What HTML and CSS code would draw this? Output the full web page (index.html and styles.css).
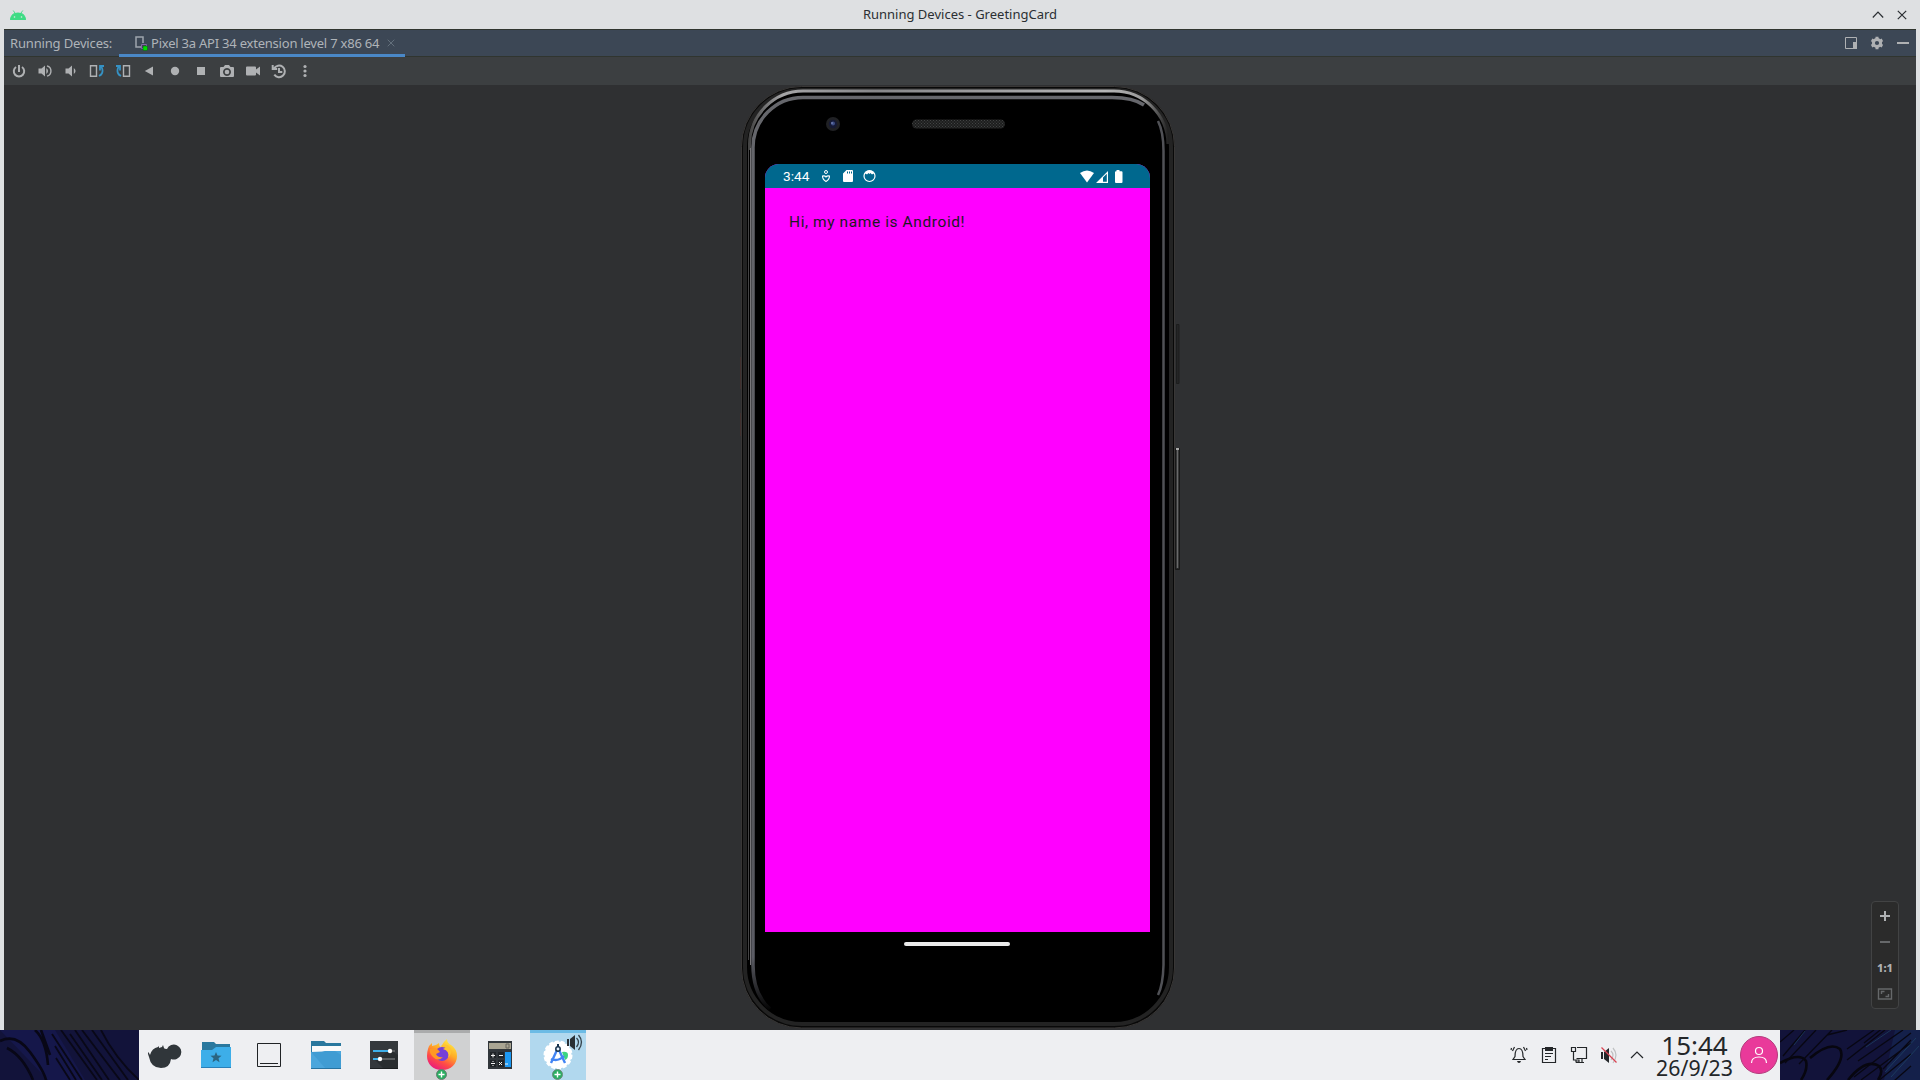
FILE: index.html
```html
<!DOCTYPE html>
<html lang="en">
<head>
<meta charset="utf-8">
<title>Running Devices - GreetingCard</title>
<link rel="stylesheet" href="styles.css">
</head>
<body>
<div class="desktop">
  <main class="window">
    <header class="titlebar">
      <svg class="app-icon" viewBox="10 8 16 12" width="16" height="12"><path d="M10.3 19C10.6 15.400 12.500 13 15 12L13.200 9.500M25.700 19C25.400 15.400 23.500 13 21 12L22.800 9.500" fill="none" stroke="#3ddc84" stroke-width=".9"/><path d="M10.200 19a7.800 7.600 0 0 1 15.600 0z" fill="#3ddc84"/><circle cx="14.500" cy="16" r=".8" fill="#dfe9e3"/><circle cx="21.500" cy="16" r=".8" fill="#dfe9e3"/></svg>
      <h1 class="title">Running Devices - GreetingCard</h1>
      <svg class="win-controls" viewBox="1870 6 40 16" width="40" height="16" fill="none" stroke="#2b2f33" stroke-width="1.200"><path d="M1872.800 16.500l5.200-5.500 5.200 5.500M1897.800 9.800l8.400 8.400m0-8.400l-8.400 8.400"/></svg>
    </header>
    <nav class="tabs">
      <span class="tabs-label">Running Devices:</span>
      <div class="tab">
        <svg viewBox="134 35 14 17" width="14" height="17"><path d="M141 48h-5V38h7v6" fill="none" stroke="#9da5ad" stroke-width="1.500"/><path d="M141.500 45.500h5v4h-5z" fill="none" stroke="#8568a8"/><rect x="143" y="47" width="4.500" height="4.500" rx="1" fill="#0d0" stroke="#174c20" stroke-width=".5"/></svg>
        <span class="tab-name">Pixel 3a API 34 extension level 7 x86 64</span>
        <svg class="tab-close" viewBox="0 0 8 8" width="8" height="8"><path d="M.7.7l6.600 6.600m0-6.600L.7 7.300" stroke="#64707c"/></svg>
      </div>
      <svg class="tab-actions" viewBox="1844 35 66 17" width="66" height="17"><path d="M1845.500 37.500h11v11h-11z" fill="none" stroke="#afb1b3"/><path d="M1853 42h4v7h-4zM1897 42h12v2h-12z" fill="#afb1b3"/><circle cx="1877" cy="43" r="3.600" fill="none" stroke="#afb1b3" stroke-width="3"/><path d="M1877 36.800v2.500m0 7.400v2.500m-5.400-9.300l2.200 1.200m6.400 3.800l2.200 1.200m0-6.200l-2.200 1.200m-6.400 3.800l-2.200 1.200" stroke="#afb1b3" stroke-width="3"/></svg>
    </nav>
    <div class="toolbar">
      <svg viewBox="-13 -14 26 28"><path d="M0-6V1M-3-4A5.200 5.200 0 1 0 3-4" class="line"/></svg>
      <svg viewBox="-13 -14 26 28"><path d="M-6.500-2.500h3L0-5.500v11L-3.500 2.500h-3z"/><path d="M1.300-3q3.500 3 0 6z"/><path d="M2-5.200a5.400 5.400 0 0 1 0 10.400" class="line thin"/></svg>
      <svg viewBox="-13 -14 26 28"><path d="M-5.500-2.500h3L1-5.500v11L-2.500 2.500h-3z"/><path d="M2.800-3q3.500 3 0 6z"/></svg>
      <svg viewBox="-13 -14 26 28"><path d="M-6.500-5.200h6v10.400h-6z" class="line thin"/><path d="M2 5Q6 3 5.500-1T2.500-4.500M3-.5v-4.500h4" class="line blue"/></svg>
      <svg viewBox="-13 -14 26 28"><path d="M.5-5.200h6v10.400h-6z" class="line thin"/><path d="M-2 5Q-6 3-5.500-1T-2.500-4.500M-3-.5v-4.500h-4" class="line blue"/></svg>
      <svg viewBox="-13 -14 26 28"><path d="M-4.200 0L4-4.500v9z"/></svg>
      <svg viewBox="-13 -14 26 28"><circle r="4.200"/></svg>
      <svg viewBox="-13 -14 26 28"><path d="M-4-4h8v8h-8z"/></svg>
      <svg viewBox="-13 -14 26 28"><path fill-rule="evenodd" d="M-6-4h2.500L-2-6h4l1.500 2H6q1 0 1 1v8q0 1-1 1H-6q-1 0-1-1v-8q0-1 1-1zM0-3a4 4 0 1 0 .01 0z"/><circle cy="1" r="2.300"/></svg>
      <svg viewBox="-13 -14 26 28"><path d="M-6-4.500h8q1 0 1 1v2l4-3v9l-4-3v2q0 1-1 1h-8q-1 0-1-1v-7q0-1 1-1z"/></svg>
      <svg viewBox="-13 -14 26 28"><path d="M-5-2.500A5.800 5.800 0 1 1-4.700 3.700M-6.300-6v4h4.500M0-3V1h3.300" class="line"/></svg>
      <svg viewBox="-13 -14 26 28"><circle cy="-4.500" r="1.600"/><circle r="1.600"/><circle cy="4.500" r="1.600"/></svg>
    </div>
    <section class="stage">
      <div class="phone">
        <svg class="phone-frame" viewBox="730 85 460 945" width="460" height="945">
          <defs>
            <linearGradient id="side" gradientUnits="userSpaceOnUse" x1="0" y1="95" x2="0" y2="1012"><stop offset="0" stop-color="#66676c"/><stop offset=".8" stop-color="#56575c"/><stop offset=".94" stop-color="#5c5d65"/><stop offset="1" stop-color="#000"/></linearGradient>
            <linearGradient id="shine" gradientUnits="userSpaceOnUse" x1="749" x2="1168" y1="0" y2="0"><stop offset="0" stop-color="#444"/><stop offset=".08" stop-color="#a5a5a7"/><stop offset=".3" stop-color="#87878a"/><stop offset=".85" stop-color="#b5b5b6"/><stop offset=".94" stop-color="#999"/><stop offset="1" stop-color="#222"/></linearGradient>
            <pattern id="mesh" width="3" height="3" patternUnits="userSpaceOnUse"><path d="M0 0h3v3H0z" fill="#1d1e1e"/><path d="M0 0h1v1H0zM1.500 1.500h1v1h-1z" fill="#424444"/></pattern>
          </defs>
          <path d="M1176.500 324.500h2.500v59h-2.500z" fill="#242526" stroke="#1c1d1d"/>
          <path d="M1175.500 448.500h4v121h-4z" fill="#262727" stroke="#181818"/><path d="M1177.500 449v119" stroke="#69696a" stroke-width="1.500"/><path d="M1176 448h3v2h-3z" fill="#aaa"/>
          <path d="M740.500 357v32m0 24v23" stroke="#40302f"/>
          <rect x="741.500" y="86.500" width="433" height="941.500" rx="60" fill="#090909" stroke="#393736"/>
          <rect x="745" y="90" width="426" height="934" rx="57" fill="#000" stroke="#232323" stroke-width="4"/>
          <path d="M748.500 960V145" fill="none" stroke="#454445"/>
          <path d="M749.500 150V144A54 54 0 0 1 803 91H1114A54 54 0 0 1 1168 144" fill="none" stroke="url(#shine)" stroke-width="3"/>
          <path d="M770 1009Q753 994 753 965V148A50 50 0 0 1 803 97.500H1112Q1133 97.500 1144 105" fill="none" stroke="url(#side)" stroke-width="3.500"/>
          <path d="M750.500 965V148" stroke="#777679"/>
          <path d="M1158 121Q1163.500 132 1163.500 151V965Q1163 985 1158 995" fill="none" stroke="#505156" stroke-width="2.500"/>
          <circle cx="833" cy="124" r="7" fill="#202124"/><circle cx="833" cy="124" r="4.200" fill="#161a35"/><circle cx="833" cy="123.500" r="2" fill="#3c4c83"/><circle cx="832" cy="123" r=".8" fill="#8e9ecd"/>
          <rect x="912" y="119.500" width="93" height="9" rx="4.500" fill="url(#mesh)"/>
        </svg>
        <div class="screen">
          <div class="statusbar">
            <span class="status-time">3:44</span>
            <svg viewBox="820 169 58 14" width="58" height="14" fill="#fff"><circle cx="826" cy="172" r="1.500" fill="none" stroke="#fff"/><path d="M822.500 176q2.500-.5 3.500 1 1-1.500 3.500-1 0 3.500-3.500 5.500-3.500-2-3.500-5.500z" fill="none" stroke="#fff" stroke-width="1.100"/><path fill-rule="evenodd" d="M846.500 170h5.500q1 0 1 1v10q0 1-1 1h-8q-1 0-1-1v-7.500zM847 171.500v2h1v-2zm2 0v2h1v-2zm2 0v2h1v-2z"/><circle cx="869.500" cy="176" r="5.500" fill="none" stroke="#fff" stroke-width="1.200"/><path d="M864 175q1-4.500 5.500-4.500t5.500 4.500l-1.500-1.500-1.500 1-1.500-1.500-1 1-1-1-1.500 1.500-1.500-1z"/></svg>
            <svg class="status-right" viewBox="1079 168 46 15" width="46" height="15" fill="#fff"><path d="M1080 172q7-5 14 0l-7 9.500z"/><path fill-rule="evenodd" d="M1096 182l12-12v12zm7-5.500v4.300h3.800v-8.100z"/><path d="M1116.500 169h3v1.200h2q1 0 1 1V181q0 1-1 1h-5.500q-1 0-1-1v-9.800q0-1 1-1h.5z"/></svg>
          </div>
          <p class="greeting">Hi, my name is Android!</p>
        </div>
        <div class="home-bar"></div>
      </div>
      <aside class="zoom-panel">
        <svg viewBox="-13 -13 26 26"><path d="M-5 0H5M0-5V5" class="line"/></svg>
        <svg viewBox="-13 -13 26 26"><path d="M-5 0H5" class="line dim"/></svg>
        <span class="ratio">1:1</span>
        <svg viewBox="-13 -13 26 26"><path d="M-6.500-5h13V5h-13zM-3.500 0v-2.500h3M3.500 0v2.500h-3" class="line dim thin"/></svg>
      </aside>
    </section>
  </main>
  <footer class="bottom">
    <svg class="wall" viewBox="0 1030 139 50" preserveAspectRatio="none"><path d="M0 1030h139v50H0z" fill="#12133a"/><path d="M0 1030h55l30 50H48z" fill="#15174a"/><path d="M0 1041Q16 1033 30 1052T46 1080M7 1048Q23 1056 33 1080M35 1030Q46 1040 48 1065M41 1030L50 1055" fill="none" stroke="#080716" stroke-width="2.600"/><path d="M52 1034l30 46M55 1046l21 34M61 1030l36 50M75 1030l34 50M82 1030l38 50M92 1030l36 50M101 1030q14 28 38 50M56 1058l14 22M70 1034l32 46" fill="none" stroke="#090817" stroke-width="1.800"/></svg>
    <div class="taskbar">
      <div class="launchers">
        <span class="task"><svg viewBox="145 1036 40 38"><path d="M148 1052l1 1 1 2q2-7 8-8l1-1v2l3-1 1-2 1 3q0 1 3 1a7.500 7.500 0 1 1 4 10q-1 9-10 9-10 0-12-11l-1-3z" fill="#30363a"/></svg></span>
        <span class="task"><svg viewBox="196 1036 40 38"><path d="M202 1042h12l2 2h14v10h-28z" fill="#2a789e"/><path d="M201 1050h11l4-3h15v21h-30z" fill="#3daee9"/><path d="M201 1067h30v1h-30z" fill="#2980b9"/><path d="M216 1052l1.500 3.500 4 .2-3 2.600 1 3.900-3.500-2.200-3.500 2.200 1-3.900-3-2.600 4-.2z" fill="#2b6480"/></svg></span>
        <span class="task"><svg viewBox="249 1036 40 38"><path d="M257.500 1043.500h23v23h-23zM260 1063.500h18" fill="none" stroke="#202326"/></svg></span>
        <span class="task"><svg viewBox="306 1036 40 38"><path d="M311 1041h13l2 2h15v14h-30z" fill="#2a789e"/><path d="M312 1046h29v9h-29z" fill="#fafafa"/><path d="M311 1052h11l3-1h16v18h-30z" fill="#4ba6dc"/><path d="M311 1052l15 17h15v-14l-6-4h-10z" fill="#3994cc" opacity=".55"/><path d="M311 1068h30v1h-30z" fill="#2773a1"/></svg></span>
        <span class="task"><svg viewBox="364 1036 40 38"><path d="M370 1041h28v28h-28z" fill="#34383c"/><path d="M375 1060l9 9h14v-14l-8-5z" fill="#292d30"/><path d="M370 1068h28v1h-28z" fill="#1b1e20"/><path d="M373 1051h17M373 1059h7" stroke="#3daee9" stroke-width="2"/><path d="M391 1051h4M380 1059h15" stroke="#5b5e61" stroke-width="2"/><circle cx="390" cy="1051" r="2.200" fill="#fff"/><circle cx="380" cy="1059" r="2.200" fill="#fff"/></svg></span>
        <span class="task running"><svg viewBox="422 1032 40 48" class="tall"><defs><linearGradient id="fox" x1=".8" y1="0" x2=".25" y2="1"><stop offset="0" stop-color="#fff14a"/><stop offset=".4" stop-color="#ffad27"/><stop offset=".7" stop-color="#ff4d45"/><stop offset="1" stop-color="#e81583"/></linearGradient></defs><path d="M428 1049q1-4 4-6v3l4-1 3-2q0 3 2 5 1-5 6-9 0 4 4 6 6 4 6 11c0 8-6 14-15 14s-15-6-15-14q0-4 1-7z" fill="url(#fox)"/><circle cx="442" cy="1054" r="7" fill="#7540d8"/><path d="M430 1049l5-1q3 1 5 4l-4 2q2 4 7 3-5 5-10 0-4-4-3-8z" fill="#ff9825"/><path d="M439 1047q5-2 8 0l-4 2q7 2 5 9 5-5 2-11-4-5-11 0z" fill="#ffc331"/><circle cx="441.500" cy="1074.500" r="5" fill="#27ae60" stroke="#6c7b72"/><path d="M438.500 1074.500h6m-3-3v6" stroke="#fff" stroke-width="1.400"/></svg></span>
        <span class="task"><svg viewBox="480 1036 40 38"><path d="M488 1041h24v28h-24z" fill="#31363b"/><path d="M489 1043h22v6h-22z" fill="#aaa593"/><path d="M506 1044h3v4h-3z" fill="none" stroke="#69675f"/><path d="M490 1052h6v6h-6zm8 0h6v6h-6zm-8 8h6v7h-6zm8 0h6v7h-6z" fill="#202428"/><path d="M505 1052h6v15h-6z" fill="#1d99f3"/><path d="M491 1055.500h4m-2-2v4m6-2h4m-12 8h4m-2-2.500v1m0 3v1m6-4l3 3m0-3l-3 3m6-1h3" stroke="#f3f3f3"/></svg></span>
        <span class="task active"><svg viewBox="530 1032 56 48" class="tall wide"><circle cx="558" cy="1055" r="13.500" fill="#fff" stroke="#fff" stroke-width="2" stroke-dasharray="4 2"/><path d="M562 1052q6-1 6 3t-3 5z" fill="#3bd580"/><path d="M557 1050l-6 13m8-13l6 13M551 1059q7 3 13-3" fill="none" stroke="#4285f4" stroke-width="2.400"/><circle cx="558" cy="1049" r="2.200" fill="#e8f3ff" stroke="#17344d" stroke-width="1.500"/><path d="M558 1044v3" stroke="#17344d" stroke-width="2"/><path d="M567 1039h2v7h-2zM570 1039l5-4v15l-5-4z" fill="#292f34"/><path d="M576.500 1038q4 4 0 9M578.500 1035q6 7 0 15" fill="none" stroke="#35434c" stroke-width="1.300"/><circle cx="557.500" cy="1074.500" r="5" fill="#27ae60" stroke="#6c8b7c"/><path d="M554.500 1074.500h6m-3-3v6" stroke="#fff" stroke-width="1.400"/></svg></span>
      </div>
      <div class="tray">
        <svg viewBox="1509 1044 140 22" width="140" height="22" fill="none" stroke="#232629" stroke-width="1.200"><path d="M1513 1059.500h12l-2-3q0-8-4-8t-4 8zM1514.500 1047l-2 4m-1-3l-.5 2m12.500-3l2 4m1-3l.5 2"/><path d="M1517 1061h4q-.5 2-2 2t-2-2z" fill="#232629" stroke="none"/><path d="M1542.500 1048.500h13v14h-13zM1545 1053.500h8m-8 3h6m-6 3h3"/><path d="M1545 1047h8v4h-8z" fill="#232629" stroke="none"/><path d="M1571.500 1047.500h4v4h-4zM1573.500 1052v8h5M1577 1047.500h9.500v11h-10M1582 1058v4m-6 .5h8M1576 1060h3v2h-3z"/><path d="M1601 1052h2v7h-2zM1604 1052l5-4v15l-5-4z" fill="#232629" stroke="none"/><path d="M1611 1051q4 4 0 9m2-12q6 7 0 15" stroke="#bfc0c2"/><path d="M1601.500 1047.500l15 15" stroke="#da4453"/><path d="M1631 1058l6-6 6 6"/></svg>
        <div class="clock"><span class="time">15:44</span><span class="date">26/9/23</span></div>
        <svg class="avatar" viewBox="0 0 38 38" width="38" height="38"><circle cx="19" cy="19" r="18.500" fill="#e93a9a" stroke="#b33b7c"/><g fill="none" stroke="#fff" stroke-width="1.200"><circle cx="19" cy="15" r="3.500"/><path d="M11.500 27q0-6 7.500-6t7.500 6"/></g></svg>
      </div>
    </div>
    <svg class="wall" viewBox="1780 1030 140 50" preserveAspectRatio="none"><path d="M1780 1030h140v50h-140z" fill="#12133a"/><path d="M1895 1030h25v50h-36z" fill="#14204a"/><path d="M1780 1063q20-11 26-2 2 9-5 19M1810 1058q20-17 30-9 6 10-13 31M1848 1080q18-22 31-14 5 5-1 14" fill="none" stroke="#07060f" stroke-width="2.600"/><path d="M1783 1056l22-26m-20 33l31-33m-36 12l14-12m33 5l20-5m-48 34l33-34m15 19l27-19m-27 30l38-30m-27 31l45-31m-49 47l57-44m-50 47l50-37m-34 39l34-28m-25 34l25-22m-47-23l30-24m-11 50l28-29" fill="none" stroke="#080712" stroke-width="1.300"/><path d="M1885 1072l31-34m-25 39l28-31m-53 1l25-17m-97 15l11-14" stroke="#235070" stroke-width=".7" opacity=".8"/></svg>
  </footer>
</div>
</body>
</html>
```
FILE: styles.css
```css
* { box-sizing: border-box; }
body { margin: 0; font-family: "Noto Sans", sans-serif; overflow: hidden; }
h1, p { margin: 0; font-weight: 400; }
svg { display: block; flex: none; }

.desktop { width: 1920px; height: 1080px; display: flex; flex-direction: column; }
.window { height: 1030px; padding: 0 4px; background: #dee0e2; display: flex; flex-direction: column; }

.titlebar { height: 29px; display: flex; align-items: center; justify-content: space-between; margin: 0 -4px; padding: 0 10px; flex: none; }
.app-icon { margin-right: 24px; }
.title { font-size: 13px; line-height: 26px; padding-bottom: 2px; color: #2b2f33; }

.tabs { height: 28px; flex: none; display: flex; background: #3c4755; border-top: 1px solid #30352f; border-bottom: 1px solid #30352f; padding-left: 6px; font-size: 13px; line-height: 27px; color: #afb4b9; }
.tabs-label { width: 109px; white-space: nowrap; letter-spacing: -.16px; }
.tab { display: flex; align-items: center; width: 286px; height: 27px; padding: 0 10px 0 15px; border-bottom: 3px solid #4a88c7; }
.tab-name { margin-left: 3px; padding-top: 2px; white-space: nowrap; line-height: 24px; letter-spacing: -.22px; }
.tab-close { margin: 2px 0 0 auto; }
.tab-actions { margin: 5px 6px 0 auto; }

.toolbar { height: 28px; flex: none; display: flex; padding-left: 2px; background: #3c3f41; fill: #afb1b3; }
.toolbar svg { width: 26px; height: 28px; }
.line { fill: none; stroke: #afb1b3; stroke-width: 2; }
.line.thin { stroke-width: 1.4; }
.line.blue { stroke: #3592c4; stroke-width: 1.8; }
.line.dim { stroke: #66686a; }

.stage { flex: 1; display: flex; justify-content: space-between; align-items: flex-end; background: #2f3032; padding: 0 17px 0 726px; }
.phone { position: relative; width: 460px; height: 945px; padding: 79px 40px 0 35px; }
.phone-frame { position: absolute; inset: 0; }
.screen { position: relative; height: 768px; background: #f0f; border-radius: 14px 14px 0 0; overflow: hidden; font-family: Roboto, sans-serif; }
.statusbar { height: 24px; display: flex; align-items: center; background: #00688e; padding: 0 25px 0 18px; color: #fff; }
.status-time { width: 37px; font-size: 13.7px; }
.status-right { margin-left: auto; }
.greeting { padding: 23px 24px; font-size: 15.5px; line-height: 22px; letter-spacing: .59px; color: #1c1b1f; }
.home-bar { position: relative; width: 106px; height: 4px; margin: 10px auto 0 139px; border-radius: 2px; background: #ebebeb; }

.zoom-panel { width: 28px; height: 108px; margin-bottom: 21px; padding: 1px 0; border: 1px solid #424344; border-radius: 4px; background: #2b2b2b; display: flex; flex-direction: column; align-items: center; }
.zoom-panel svg { width: 26px; height: 26px; }
.ratio { height: 26px; line-height: 26px; font-size: 11px; font-weight: 800; color: #afb1b3; }

.bottom { height: 50px; display: grid; grid-template-columns: 139px 1641px 140px; }
.wall { width: 100%; height: 50px; }
.taskbar { display: flex; justify-content: space-between; background: #eeeff2; }
.launchers { display: grid; grid-template-columns: 52px 50px 55px 59px 57px 58px 60px 56px; }
.launchers { grid-template-columns: 52px 50px 56px 57px 60px 56px 60px 56px; }
.task { display: flex; justify-content: center; padding-top: 6px; }
.task svg { width: 40px; height: 38px; }
.task .tall { height: 48px; }
.task .wide { width: 56px; }
.task.running { padding-top: 0; border-top: 3px solid #aaabac; background: #d0d1d2; }
.task.active { padding-top: 0; border-top: 3px solid #6cbbe5; background: #b1d8ee; }
.running svg, .active svg { margin-top: -1px; }
.tray { display: flex; align-items: center; padding-right: 2px; }
.clock { width: 91px; display: flex; flex-direction: column; align-items: center; color: #232629; padding-bottom: 1px; }
.time { font-size: 26px; line-height: 25px; }
.date { font-size: 21.3px; line-height: 19px; }
```
